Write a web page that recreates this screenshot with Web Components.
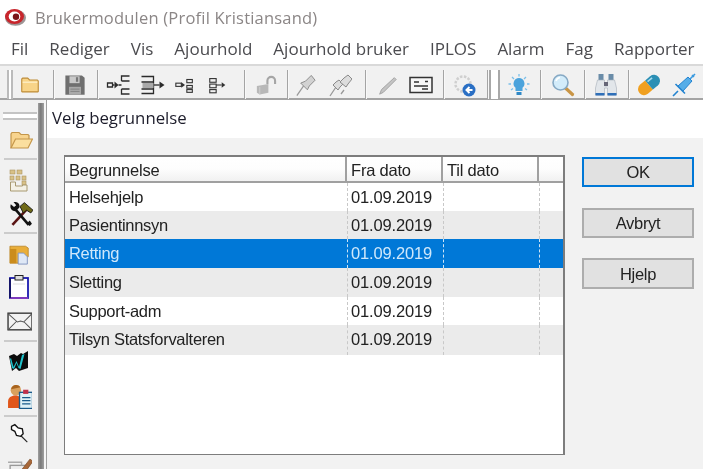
<!DOCTYPE html>
<html lang="no"><head><meta charset="utf-8"><title>Velg begrunnelse</title>
<style>html,body{margin:0;padding:0;background:#fff;overflow:hidden;width:703px;height:469px}</style>
</head><body>
<app-shell>
  <title-bar>Brukermodulen (Profil Kristiansand)</title-bar>
  <menu-bar items="Fil|Rediger|Vis|Ajourhold|Ajourhold bruker|IPLOS|Alarm|Fag|Rapporter"></menu-bar>
  <tool-bar></tool-bar>
  <div style="display:flex;height:369px">
    <side-bar></side-bar>
    <pick-dialog heading="Velg begrunnelse">
      <reason-table>
        <reason-row from="01.09.2019">Helsehjelp</reason-row>
        <reason-row from="01.09.2019" alt>Pasientinnsyn</reason-row>
        <reason-row from="01.09.2019" selected>Retting</reason-row>
        <reason-row from="01.09.2019" alt>Sletting</reason-row>
        <reason-row from="01.09.2019">Support-adm</reason-row>
        <reason-row from="01.09.2019" alt>Tilsyn Statsforvalteren</reason-row>
      </reason-table>
      <win-button slot="actions" default>OK</win-button>
      <win-button slot="actions">Avbryt</win-button>
      <win-button slot="actions" tall>Hjelp</win-button>
    </pick-dialog>
  </div>
</app-shell>
<script>
const ICONS = {
folder:`<path d="M3 7.500V5.500L4 4.500h5.500l2 2H20l1 1V19l-.5.5h-17L3 19z" fill="#f8d488" stroke="#bd8b36" stroke-width="1.200"/><path d="M4 9h16" stroke="#fdecc0" stroke-width="1.500"/>`,
save:`<path d="M1.500 1.500h18l3 2.500v18.500h-21z" fill="#6f6f6f"/><rect x="6" y="2.500" width="11" height="7.500" fill="#c9c9c9"/><rect x="13" y="3.500" width="2.500" height="5" fill="#777"/><rect x="5.500" y="14" width="13" height="8.500" fill="#a9a9a9"/><path d="M7 16.500h10M7 19h10" stroke="#808080"/>`,
tree1:`<g fill="none" stroke="#2b2b2b" stroke-width="1.300"><path d="M1 10h5v4H1zM6 12h2M12 12h3M15 8V3h8M15 8h8M15 16v5h8M15 16h8"/></g><path d="M8 8.500l4 3.500-4 3.500z" fill="#2b2b2b"/>`,
tree2:`<g fill="none" stroke="#2b2b2b" stroke-width="1.300"><path d="M1 3.500h12V9H1M13 9v7H1M1 20.500h12V16"/><path d="M13 12h6"/></g><rect x="2" y="10" width="11" height="5" fill="#aaa"/><path d="M19 8.500l5 3.500-5 3.500z" fill="#2b2b2b"/>`,
tree3:`<g fill="none" stroke="#333" stroke-width="1.200"><rect x="2" y="10" width="6" height="3.500"/><rect x="14" y="6" width="6" height="3.500"/><rect x="14" y="12.500" width="6" height="3"/><rect x="14" y="17" width="6" height="3"/></g><path d="M8 9l4 3-4 3z" fill="#333"/>`,
tree4:`<g fill="none" stroke="#333" stroke-width="1.200"><rect x="3" y="5" width="7" height="4"/><rect x="3" y="11" width="7" height="4"/><rect x="3" y="17" width="7" height="3.500"/><path d="M10 12h6"/></g><path d="M16 9l4 3-4 3z" fill="#333"/>`,
lock:`<path d="M14 11V7.500a4 4 0 0 1 8 0V11" fill="none" stroke="#a5a5a5" stroke-width="2.200"/><path d="M3 13l12-2v9l-9 2-3-2z" fill="#b8b8b8"/><path d="M6 14v8" stroke="#d0d0d0"/>`,
pin:`<path d="M3 23l7-10" stroke="#999" stroke-width="1.300"/><path d="M7 10l7 7 2-4 6-6-4-5-6 6z" fill="#d2d2d2" stroke="#8a8a8a"/>`,
pins:`<path d="M2 23l6-9M13 21l3-4" stroke="#999" stroke-width="1.300"/><path d="M5 12l5 5 2-3 3-3-4-4-3 2z" fill="#ddd" stroke="#8a8a8a"/><path d="M12 9l6 5 2-3 4-5-4-4-4 3z" fill="#ddd" stroke="#8a8a8a"/>`,
pen:`<path d="M4 22l2-5L20 4l2 2L8 20z" fill="#c4c4c4" stroke="#a0a0a0"/>`,
card:`<rect x="1" y="4.500" width="22" height="15" fill="#f7f7f7" stroke="#333" stroke-width="1.500"/><path d="M5 9h5M5 13h14M13 16h6M16 8.500h3" stroke="#333" stroke-width="1.300" fill="none"/>`,
cogblue:`<circle cx="10" cy="11" r="7.500" fill="none" stroke="#cfcfcf" stroke-width="2.500" stroke-dasharray="2.500 1.500"/><circle cx="16" cy="17" r="6.500" fill="#2a6fc4"/><path d="M19.500 17h-5M16.500 14l-3 3 3 3" stroke="#fff" stroke-width="2" fill="none"/>`,
bulb:`<path d="M12 5a5.500 5.500 0 0 1 3.500 9.700V18h-7v-3.300A5.500 5.500 0 0 1 12 5z" fill="#4ba3dc"/><rect x="9.500" y="19" width="5" height="3" fill="#2f88c6"/><path d="M12 1v2.500M5 4l2 2M19 4l-2 2M1.500 11H4M20 11h2.500M4 17l2-1.500M20 17l-2-1.500" stroke="#7cc0ea" stroke-width="1.300"/>`,
mag:`<path d="M14.500 15l7 6.500" stroke="#c99545" stroke-width="3.200" stroke-linecap="round"/><circle cx="9.500" cy="9.500" r="7.500" fill="#d3ecfa" stroke="#86a9c4" stroke-width="1.600"/><path d="M5 8a5 5 0 0 1 4-3.500" stroke="#fff" stroke-width="1.600" fill="none"/>`,
binoc:`<rect x="4.500" y="1" width="5" height="6" fill="#6a8ca8"/><rect x="14.500" y="1" width="5" height="6" fill="#6a8ca8"/><path d="M3.500 7h7v6h3V7h7l2 8v7h-9v-7h-3v7H1.500v-7z" fill="#e2e6ea" stroke="#a6afb8" stroke-width=".6"/><rect x="10" y="9" width="4" height="4" fill="#667"/><rect x="1.500" y="20" width="9" height="2.500" fill="#2f6fb8"/><rect x="13.500" y="20" width="9" height="2.500" fill="#2f6fb8"/>`,
pill:`<g transform="rotate(-40 12 12)"><path d="M12 6H5.500a6 6 0 0 0 0 12H12z" fill="#f0a020"/><path d="M12 6h6.500a6 6 0 0 1 0 12H12z" fill="#2b8fb4"/><path d="M13 8.500h6" stroke="#a6dcef" stroke-width="1.500"/></g>`,
syringe:`<path d="M23 1l-5 5" stroke="#3a9ae0" stroke-width="1.600"/><path d="M20 2l2 2" stroke="#3a9ae0" stroke-width="1.500"/><path d="M6 13l10-9 4 4-9 10z" fill="#55ade8" stroke="#2484d0"/><path d="M1 23l5-5M3.500 11l9.500 9.500" stroke="#2484d0" stroke-width="1.600"/>`,
open:`<path d="M2 20V6L3 4.500h7l2 2h7l1 1v4" fill="#f8d48e" stroke="#c4964a" stroke-width="1.200"/><path d="M2 20l4.500-9h17L19 20z" fill="#fbdf9f" stroke="#c4964a" stroke-width="1.200"/>`,
boxes:`<g fill="#d8c188" stroke="#ab9560" stroke-width=".6"><rect x="2" y="2" width="5" height="4"/><rect x="9" y="2" width="5" height="4"/><rect x="2" y="8" width="4" height="4"/><rect x="8" y="8" width="4" height="4"/><rect x="14" y="8" width="4" height="4"/><rect x="14" y="13" width="4" height="4"/></g><path d="M2.500 14h5v4h7v-1H19v6H2.500z" fill="#f4f1e6" stroke="#a89970"/>`,
tools:`<path d="M5 22L18 8" stroke="#5a1414" stroke-width="2.400"/><path d="M20 22L8 8" stroke="#111" stroke-width="2.400"/><path d="M8 9.500C3.500 9 2.500 6 3.500 3l3 2.500 2-1.500-2.500-3c4-.5 6 1.500 5.500 5z" fill="#111"/><path d="M12 5l4-3.500 8 7-2 2.500-4-2.500-3 2.500z" fill="#706a18" stroke="#111" stroke-width=".8"/><path d="M18 21l3-3 2 3-2 2z" fill="#111"/>`,
folddoc:`<path d="M1 3.500h17l3 2V15h-4v7H1z" fill="#e9ae3a" stroke="#b57e20" stroke-width=".8"/><path d="M1 6.500h7V22H1z" fill="#cb8c1c"/><path d="M10 11h6l4 4v8H10z" fill="#dfe8f6" stroke="#7f93bf"/>`,
clip:`<rect x="3" y="3" width="18" height="20" fill="#fff" stroke="#1a1ab0" stroke-width="1.800"/><path d="M3 23h18" stroke="#a040c0" stroke-width="1.400"/><path d="M3 3v20" stroke="#15156a" stroke-width="2"/><rect x="8" y="0.500" width="8" height="4.500" fill="#ddd" stroke="#222"/><path d="M6 9h12" stroke="#ddd"/>`,
env:`<rect x="1" y="4" width="23" height="16" fill="#f2f2f2" stroke="#333" stroke-width="1.300"/><path d="M1 4.500l9 8 3-1 3 1 8-8M1 20l8-8M24 20l-8-8" fill="none" stroke="#555"/>`,
w:`<path d="M2 6l3 15 4-3 3 3 9-3V1l-5 3-2-1-4 3-3-2z" fill="#0c0c0c"/><path d="M4 8l2.500 9 3-6 2.500 6 3-12 2.500-1-4 15-2-1-2-5-2.500 6-2-1-2-9z" fill="#1fc3cc"/>`,
person:`<circle cx="8.500" cy="6" r="5" fill="#d9a05c"/><path d="M4 5a5 5 0 0 1 9-2z" fill="#a8641f"/><path d="M1 23v-6c0-4 3-6 7-6 2 0 3.500.5 5 2v10z" fill="#e0561a"/><rect x="12" y="8" width="12.500" height="15.500" fill="#dff0f6" stroke="#1a5a8a" stroke-width="1.300"/><rect x="15.500" y="5.500" width="5" height="4" fill="#c0304a"/><path d="M14.500 13h8M14.500 16h8M14.500 19h8" stroke="#1a5a8a" stroke-width="1.200"/>`,
pinb:`<path d="M14 15l8 8" stroke="#222" stroke-width="1.300"/><path d="M3 4l4-2 4 4 5 1 1 6-3 3-5-1-2-5-4-2z" fill="#fff" stroke="#111" stroke-width="1.600"/>`,
edit:`<rect x="3" y="9" width="15" height="15" fill="#eee" stroke="#999" stroke-width="1.300"/><path d="M1 6h13v3" fill="none" stroke="#aaa" stroke-width="1.300"/><path d="M8 21L22 3l3 2-13 18-5 1z" fill="#a8683a" stroke="#6e3f1c" stroke-width=".6"/>`
};
function svg(name,w,h,vb){return `<svg xmlns="http://www.w3.org/2000/svg" width="${w}" height="${h}" viewBox="${vb||'0 0 24 24'}" style="display:block;flex:none">${ICONS[name]}</svg>`;}
function shadow(el,html){el.attachShadow({mode:'open'}).innerHTML=html;}

customElements.define('app-shell',class extends HTMLElement{constructor(){super();shadow(this,`<style>:host{display:flex;flex-direction:column;width:703px;height:469px;overflow:hidden;background:#fff;filter:blur(.55px)}</style><slot></slot>`);}});

customElements.define('title-bar',class extends HTMLElement{constructor(){super();shadow(this,`<style>:host{display:flex;align-items:center;height:34px;padding-left:4px;box-sizing:border-box;background:#fff;color:#8b8686;font:16.500px/20px "Open Sans",sans-serif;letter-spacing:.2px}
span{margin-left:9px;white-space:nowrap;margin-top:2px}</style>
<svg width="22" height="18" viewBox="0 0 22 18"><ellipse cx="11.500" cy="9.800" rx="10.500" ry="8" fill="#9d9595"/><ellipse cx="10.500" cy="8.500" rx="9.500" ry="7.500" fill="#c8262c"/><ellipse cx="10.500" cy="8.500" rx="5.800" ry="5" fill="#fff"/><ellipse cx="12" cy="8.800" rx="3.200" ry="3.300" fill="#7a1518"/></svg><span><slot></slot></span>`);}});

customElements.define('menu-bar',class extends HTMLElement{connectedCallback(){if(this.shadowRoot)return;shadow(this,`<style>:host{display:flex;align-items:center;height:30px;padding-left:11px;gap:21px;box-sizing:border-box;background:#fff;color:#4b4b4f;font:17px/20px "Open Sans",sans-serif;white-space:nowrap}</style>${this.getAttribute('items').split('|').map(t=>`<span>${t}</span>`).join('')}`);}});

/* sequence of items: [kind, left x, width] – left margins are computed from the previous item's end */
customElements.define('tool-bar',class extends HTMLElement{constructor(){super();
const seq=[['grip',7,6],['folder',19,22],['sep',53],['save',64,22],['sep',97],['tree1',106,25],['tree2',140,25],['tree3',174,22],['tree4',207,22],['sep',244],['lock',254,23],['sep',287],['pin',294,23],['pins',328,24],['sep',365],['pen',376,22],['card',409,24],['sep',443],['cogblue',453,24],['sep',487],['grip2',489,11],['bulb',507,24],['sep',540],['mag',551,24],['sep',584],['binoc',594,24],['sep',628],['pill',637,24],['syringe',672,24]];
let c=0,h='';for(const [k,x,w] of seq){const m=x-c;
 if(k==='sep'){h+=`<i class="sep" style="margin-left:${m}px"></i>`;c=x+2;}
 else if(k==='grip'){h+=`<i class="grip" style="margin-left:${m}px;width:${w}px"></i>`;c=x+w;}
 else if(k==='grip2'){h+=`<i class="grip2" style="margin-left:${m}px;width:${w}px"></i>`;c=x+w;}
 else{h+=`<span style="margin-left:${m}px;display:block;width:${w}px">${svg(k,w,24)}</span>`;c=x+w;}}
shadow(this,`<style>:host{display:flex;align-items:center;height:36px;box-sizing:border-box;padding-top:5px;background:#f1f1f1;border-top:2px solid #d9d9d9;border-bottom:2px solid #a4a4a4}
.sep{display:block;width:2px;height:29px;background:linear-gradient(90deg,#a4a4a4 50%,#f8f8f8 50%);flex:none}
.grip{display:block;height:29px;flex:none;border-left:2px solid #bbb;border-right:2px solid #bbb;box-sizing:border-box;background:#fff}
.grip2{display:block;height:29px;flex:none;background:linear-gradient(90deg,#a8a8a8 0 2px,#fff 2px 9px,#a8a8a8 9px);}
span{flex:none}</style>${h}`);}});

customElements.define('side-bar',class extends HTMLElement{constructor(){super();
const seq=[['grip',12],['open',28,24,9],['sep',58],['boxes',68,24,8],['tools',101,26,7],['sep',132],['folddoc',143,22,9],['clip',175,24,7],['env',209,25,7],['sep',240],['w',250,24,7],['person',284,25,7],['sep',315],['pinb',323,20,9],['edit',356,25,7]];
let c=0,h='';for(const [k,y,s,x] of seq){const m=y-c;
 if(k==='grip'){h+=`<i class="grip" style="margin-top:${m}px"></i>`;c=y+8;}
 else if(k==='sep'){h+=`<i class="sep" style="margin-top:${m}px"></i>`;c=y+2;}
 else{h+=`<span style="margin-top:${m}px;margin-left:${x}px;display:block">${svg(k,s,s)}</span>`;c=y+s;}}
shadow(this,`<style>:host{display:flex;flex:none;width:47px;box-sizing:border-box;background:#f1f1f1}
.col{width:38px;flex:none;overflow:hidden;height:369px}
.col>*{flex:none}
.grip{display:block;width:34px;height:8px;margin-left:3px;box-sizing:border-box;border-top:2px solid #c4c4c4;border-bottom:2px solid #c4c4c4;background:#fff}
.sep{display:block;width:33px;height:2px;margin-left:4px;background:#cccccc}
.bar{width:6px;flex:none;margin-top:3px;background:linear-gradient(90deg,#a0a0a0,#7a7a7a 45%,#a0a0a0)}
.edge{flex:none;background:#f6f6f6;border-right:1px solid #a0a0a0;width:2px}</style>
<div class="col">${h}</div><div class="bar"></div><div class="edge"></div>`);}});

customElements.define('pick-dialog',class extends HTMLElement{connectedCallback(){if(this.shadowRoot)return;shadow(this,`<style>:host{display:flex;flex-direction:column;flex:1;min-width:0;background:#f2f2f2}
h1{margin:0;height:38px;box-sizing:border-box;padding:8px 0 0 5px;background:#fff;color:#1c1c2a;font:500 16.800px/20px "Open Sans",sans-serif}
.body{display:flex;padding:17px 0 0 17px;align-items:flex-start}
.actions{display:flex;flex-direction:column;margin-left:17px;padding-top:2px}</style>
<h1>${this.getAttribute('heading')}</h1><div class="body"><slot></slot><div class="actions"><slot name="actions"></slot></div></div>`);}});

customElements.define('reason-table',class extends HTMLElement{constructor(){super();shadow(this,`<style>:host{display:flex;flex-direction:column;width:501px;height:300px;box-sizing:border-box;background:#fff;border:1px solid #7d7d7d;border-top-width:2px;border-right-width:2px;font:16.500px/20px "Liberation Sans",sans-serif;color:#222}
.head{display:grid;grid-template-columns:282px 96px 96px 1fr;height:24px;border-bottom:2px solid #a0a0a0;flex:none}
.head div{box-sizing:border-box;padding:3px 0 0 4px;background:linear-gradient(#fff,#fdfdfd 50%,#f1f1f1);border-right:2px solid #a0a0a0;letter-spacing:-.2px}
.head div:last-child{border-right:0}
.rows{display:grid;grid-template-rows:28px 28px 29px 29px 28px 30px}</style>
<div class="head"><div>Begrunnelse</div><div>Fra dato</div><div>Til dato</div><div></div></div><div class="rows"><slot></slot></div>`);}});

customElements.define('reason-row',class extends HTMLElement{connectedCallback(){if(this.shadowRoot)return;shadow(this,`<style>:host{display:grid;grid-template-columns:282px 96px 96px 1fr;background:#fff;color:#222}
:host([alt]){background:#ebebeb}
:host([selected]){background:#0078d7;color:#cfe8fb}
div{box-sizing:border-box;padding:4px 0 0 4px;white-space:nowrap;letter-spacing:-.3px}
div+div{border-left:1px dashed #c8c8c8}
:host([selected]) div+div{border-left-color:#cfe4f5}
.d{letter-spacing:-.15px;padding-left:3px}</style><div><slot></slot></div><div class="d">${this.getAttribute('from')}</div><div></div><div></div>`);}});

customElements.define('win-button',class extends HTMLElement{constructor(){super();shadow(this,`<style>:host{display:flex;align-items:center;justify-content:center;width:112px;height:30px;margin-bottom:21px;box-sizing:border-box;background:#e1e1e1;border:2px solid #adadad;color:#222;font:16.500px/20px "Liberation Sans",sans-serif;letter-spacing:-.3px}
:host([default]){border-color:#0078d7}
:host([tall]){height:31px;margin-top:-1px}</style><slot></slot>`);}});
</script>
</body></html>
